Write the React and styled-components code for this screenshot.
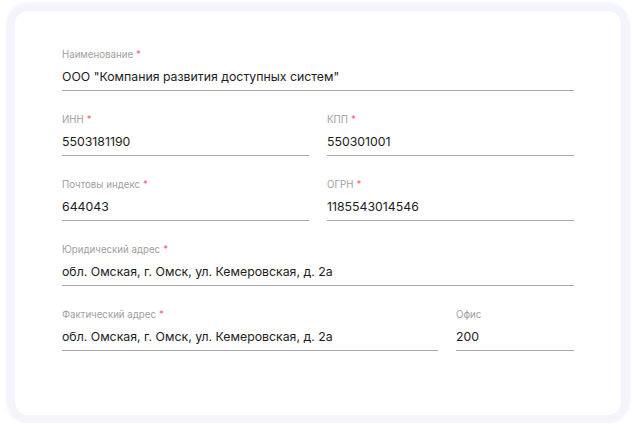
import React from "react";
import styled, { createGlobalStyle } from "styled-components";

const GlobalStyle = createGlobalStyle`
    body {
        margin: 0;
        background: #ffffff;
        font-family: Inter, "Noto Sans", sans-serif;
    }
`;

const Frame = styled.div`
    margin: 3px 7px 0;
    height: 420px;
    box-sizing: border-box;
    padding: 8px;
    border-radius: 22px;
    background: #f4f4fc;
    box-shadow: 0 0 3px 1px #f6f6fc;
`;

const Card = styled.form`
    height: 100%;
    box-sizing: border-box;
    padding: 38px 47px;
    border-radius: 13px;
    background: #ffffff;
    display: flex;
    flex-direction: column;
    gap: 23px;
`;

const Row = styled.div`
    display: grid;
    grid-template-columns: ${(p) => p.$cols || "1fr"};
    column-gap: 18px;
`;

const Field = styled.label`
    display: flex;
    flex-direction: column;
    gap: 7px;
    border-bottom: 1px solid #a9a9a9;
    padding-bottom: 4px;
`;

const Label = styled.span`
    font-size: 9.7px;
    line-height: 12px;
    color: #a0a0a0;
`;

const Star = styled.span`
    color: #f26464;
    margin-left: 3px;
`;

const Value = styled.span`
    font-size: 12.3px;
    line-height: 18px;
    color: #1c1c1c;
`;

const Input = ({ label, value, required = true }) => (
    <Field>
        <Label>
            {label}
            {required && <Star>*</Star>}
        </Label>
        <Value>{value}</Value>
    </Field>
);

export default function App() {
    return (
        <>
            <GlobalStyle />
            <Frame>
                <Card>
                    <Row>
                        <Input label="Наименование" value={'ООО "Компания развития доступных систем"'} />
                    </Row>
                    <Row $cols="1fr 1fr">
                        <Input label="ИНН" value="5503181190" />
                        <Input label="КПП" value="550301001" />
                    </Row>
                    <Row $cols="1fr 1fr">
                        <Input label="Почтовы индекс" value="644043" />
                        <Input label="ОГРН" value="1185543014546" />
                    </Row>
                    <Row>
                        <Input label="Юридический адрес" value="обл. Омская, г. Омск, ул. Кемеровская, д. 2а" />
                    </Row>
                    <Row $cols="376px 1fr">
                        <Input label="Фактический адрес" value="обл. Омская, г. Омск, ул. Кемеровская, д. 2а" />
                        <Input label="Офис" value="200" required={false} />
                    </Row>
                </Card>
            </Frame>
        </>
    );
}
